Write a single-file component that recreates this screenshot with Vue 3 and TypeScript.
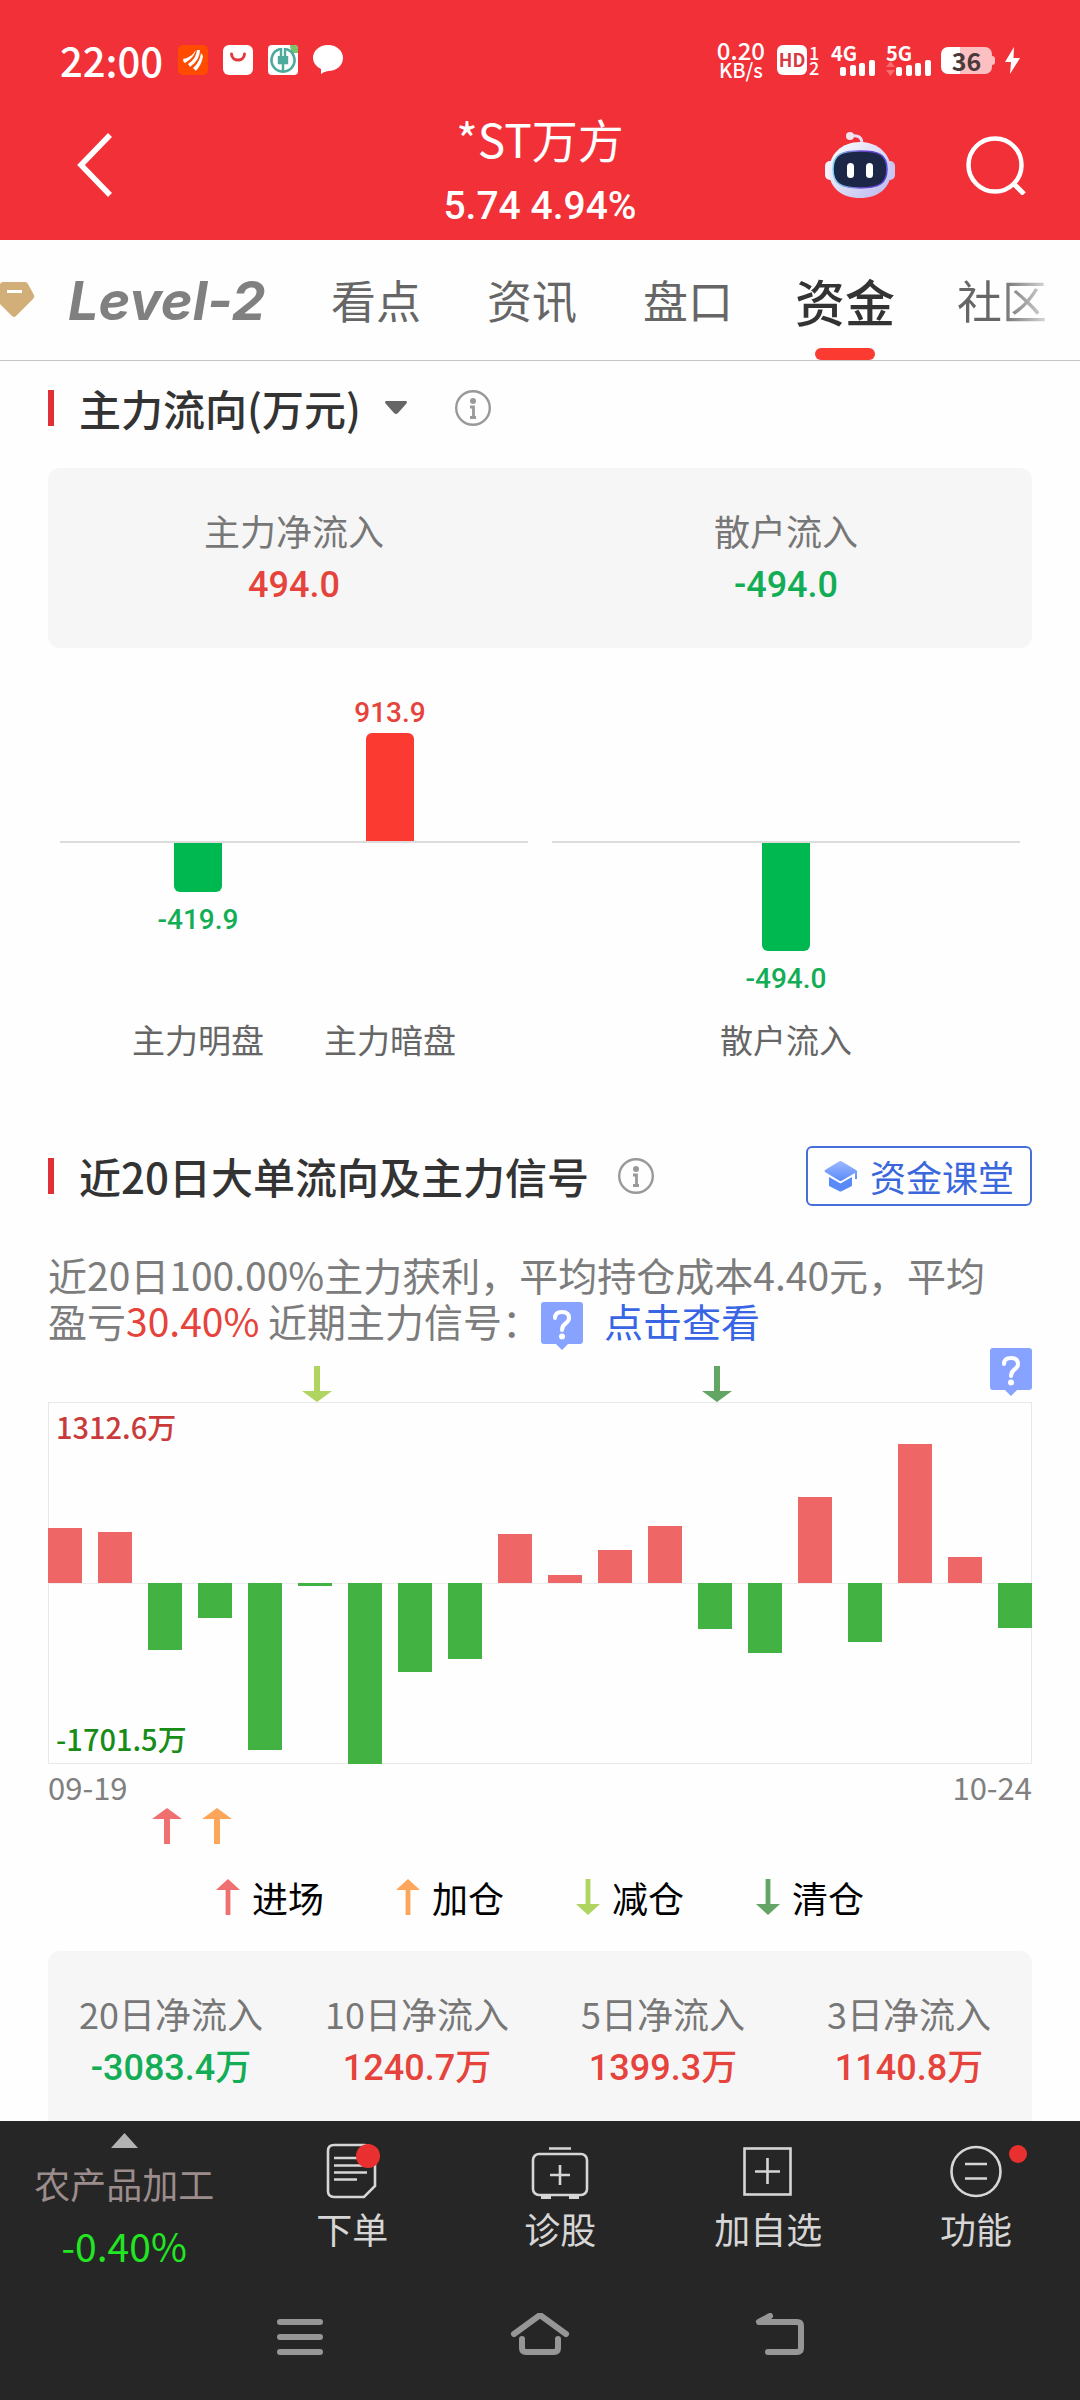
<script setup lang="ts">
interface FlowBar {
  name: string
  value: number
  height: number
}

interface Signal {
  id: string
  label: string
  color: string
  up: boolean
}

const tabs = ['看点', '资讯', '盘口', '资金', '社区']
const activeTab = '资金'

const summary = [
  { label: '主力净流入', value: 494.0 },
  { label: '散户流入', value: -494.0 },
]

const flowGroups: FlowBar[][] = [
  [
    { name: '主力明盘', value: -419.9, height: 49 },
    { name: '主力暗盘', value: 913.9, height: 108 },
  ],
  [{ name: '散户流入', value: -494.0, height: 108 }],
]

const maxFlow = 1701.5
const dailyFlow = [
  517, 484, -630, -322, -1566, -28, -1701.5, -837, -714, 461,
  75, 314, 536, -432, -656, 808, -555, 1312.6, 250, -420,
]

const signals: Signal[] = [
  { id: 'enter', label: '进场', color: '#f07070', up: true },
  { id: 'add', label: '加仓', color: '#fca65c', up: true },
  { id: 'reduce', label: '减仓', color: '#afd45f', up: false },
  { id: 'clear', label: '清仓', color: '#62a565', up: false },
]

const sellMarks: Record<number, Signal> = { 5: signals[2], 13: signals[3] }
const buyMarks: Record<number, Signal> = { 2: signals[0], 3: signals[1] }

const periods = [
  { label: '20日净流入', value: -3083.4 },
  { label: '10日净流入', value: 1240.7 },
  { label: '5日净流入', value: 1399.3 },
  { label: '3日净流入', value: 1140.8 },
]

const downPath = 'M12 0H18V25H30L15 36L0 25H12Z'
const upPath = 'M12 36H18V11H30L15 0L0 11H12Z'

const trend = (value: number) => (value < 0 ? 'down' : 'up')

const barStyle = (value: number) => {
  const size = (Math.abs(value) / maxFlow) * 50
  return value < 0
    ? { height: `${size}%`, marginTop: '181px' }
    : { height: `${size}%`, marginBottom: '181px' }
}
</script>

<template>
  <div class="page">
    <header class="top">
      <div class="status">
        <div class="status-left">
          <span class="clock">22:00</span>
          <svg width="30" height="30" viewBox="0 0 30 30">
            <rect width="30" height="30" rx="5" fill="#ff4a00" />
            <path d="M5 14Q13 13 18 5Q16 13 7 18Q5 17 5 14ZM10 19Q18 14 19 5L22 5Q22 15 12 22ZM15 23Q22 17 23 8L25 11Q24 19 18 26Z" fill="#fff" />
          </svg>
          <svg width="30" height="30" viewBox="0 0 30 30">
            <rect width="30" height="30" rx="6" fill="#fff" />
            <path d="M8.500 9C9 17 21 17 21.500 9" fill="none" stroke="#e03a40" stroke-width="3" stroke-linecap="round" />
          </svg>
          <svg width="30" height="30" viewBox="0 0 30 30">
            <rect width="30" height="30" rx="4" fill="#fff" />
            <path d="M22 0H26Q30 0 30 4V8H25Q22 5 22 0Z" fill="#7ac26a" />
            <path d="M12 4A11.500 11.500 0 1 0 18 4" fill="none" stroke="#4dab9d" stroke-width="2.600" />
            <path d="M13 3V12M17 3V12M15 12V26M11 11V18H19V11" fill="none" stroke="#4dab9d" stroke-width="2.400" />
            <rect x="11" y="11" width="8" height="8" fill="#4dab9d" />
          </svg>
          <svg width="30" height="30" viewBox="0 0 30 30">
            <path d="M15 0C24 0 30 6 30 13S24 26 15 26Q10 27 8 29V24Q0 20 0 13C0 6 6 0 15 0Z" fill="#fff" />
          </svg>
        </div>
        <div class="status-right">
          <div class="speed"><span class="rate">0.20</span><span class="unit">KB/s</span></div>
          <div class="hd">
            <span class="hd-box">HD</span>
            <span class="hd-sims"><span>1</span><span>2</span></span>
          </div>
          <div class="signal">
            <span>4G</span>
            <svg width="45" height="16" viewBox="0 0 45 16" fill="#fff">
              <rect x="9" y="7" width="6" height="9" rx="2" /><rect x="19" y="5" width="6" height="11" rx="2" />
              <rect x="28" y="3" width="6" height="13" rx="2" /><rect x="38" y="0" width="6" height="16" rx="2" />
            </svg>
          </div>
          <div class="signal">
            <span>5G</span>
            <svg width="45" height="16" viewBox="0 0 45 16" fill="#fff">
              <path d="M0 7L4.500 1L9 7ZM0 10L4.500 16L9 10Z" fill="#fa6a6e" />
              <rect x="10" y="7" width="6" height="9" rx="2" /><rect x="20" y="5" width="6" height="11" rx="2" />
              <rect x="29" y="3" width="6" height="13" rx="2" /><rect x="39" y="0" width="6" height="16" rx="2" />
            </svg>
          </div>
          <div class="battery">36</div>
          <svg width="15" height="27" viewBox="0 0 15 27"><path d="M9 0L0 15H6L5 27L15 11H8.500Z" fill="#fff" /></svg>
        </div>
      </div>
      <div class="nav">
        <div class="nav-side">
          <button class="icon-btn" type="button" aria-label="返回">
            <svg width="36" height="66" viewBox="0 0 36 66"><path d="M34 3L5 33L34 63" fill="none" stroke="#fff" stroke-width="5.500" /></svg>
          </button>
        </div>
        <div class="nav-title">
          <h1>*ST万方</h1>
          <p class="num">5.74 4.94%</p>
        </div>
        <div class="nav-side right">
          <button class="icon-btn" type="button" aria-label="智能助手">
            <svg width="72" height="66" viewBox="0 0 72 66">
              <defs>
                <linearGradient id="shell" x1="0" y1="0" x2="1" y2="1">
                  <stop offset="0" stop-color="#ffffff" /><stop offset="1" stop-color="#b9b8ee" />
                </linearGradient>
                <linearGradient id="rim" x1="0" y1="0" x2="1" y2="0">
                  <stop offset="0" stop-color="#7fd4f2" /><stop offset="0.600" stop-color="#6a3fd0" /><stop offset="1" stop-color="#5a4be0" />
                </linearGradient>
              </defs>
              <path d="M27 4Q38 2 38 12" fill="none" stroke="#e6ddf5" stroke-width="3" />
              <circle cx="26" cy="4" r="4" fill="#f3e3f0" />
              <rect x="1" y="29" width="12" height="19" rx="5" fill="#f4f1fc" />
              <rect x="59" y="29" width="12" height="19" rx="5" fill="#c9c6f2" />
              <path d="M36 10C54 10 67 22 67 39C67 56 54 66 36 66S5 56 5 39C5 22 18 10 36 10Z" fill="url(#shell)" />
              <path d="M36 19C54 19 63 22 63 37C63 51 56 56 36 56S9 51 9 37C9 22 18 19 36 19Z" fill="#1c2747" stroke="url(#rim)" stroke-width="1.500" />
              <rect x="23" y="31" width="7" height="15" rx="3.500" fill="#fff" />
              <rect x="42" y="31" width="7" height="15" rx="3.500" fill="#fff" />
            </svg>
          </button>
          <button class="icon-btn" type="button" aria-label="搜索">
            <svg width="60" height="60" viewBox="0 0 60 60" fill="none" stroke="#fff">
              <circle cx="29" cy="30" r="26.500" stroke-width="4.500" /><path d="M48 49L58 59" stroke-width="5" />
            </svg>
          </button>
        </div>
      </div>
    </header>

    <nav class="tabs">
      <svg class="gem" width="36" height="42" viewBox="0 0 36 42">
        <path d="M0 5Q1 3 3 3H25Q27 3 28 5L34 16Q35 18 33 20L16 37Q14 39 12 37L0 25Z" fill="#d2ae78" />
        <rect x="7" y="11" width="15" height="3" fill="#fff" />
      </svg>
      <a class="level" href="#level2">Level-2</a>
      <a v-for="t in tabs" :key="t" class="tab" :class="{ active: t === activeTab, fading: t === '社区' }" :href="'#' + t">{{ t }}</a>
    </nav>

    <main class="content">
      <section>
        <div class="head">
          <h2><button class="picker" type="button">主力流向(万元)<svg width="22" height="14" viewBox="0 0 22 14"><path d="M1 0H21Q23 1 21 3L13 12Q11 14 9 12L1 3Q-1 1 1 0Z" fill="#666" /></svg></button></h2>
          <button class="info first" type="button" aria-label="说明">
            <svg width="36" height="36" viewBox="0 0 36 36">
              <circle cx="18" cy="18" r="16.800" fill="none" stroke="#999" stroke-width="2.400" />
              <circle cx="18" cy="11" r="3" fill="#999" /><path d="M15 17H18.500V27M15 27.500H21" fill="none" stroke="#999" stroke-width="2.800" />
            </svg>
          </button>
        </div>

        <dl class="card">
          <div v-for="s in summary" :key="s.label" class="stat">
            <dt>{{ s.label }}</dt>
            <dd class="num" :class="trend(s.value)">{{ s.value.toFixed(1) }}</dd>
          </div>
        </dl>

        <div class="flow">
          <div v-for="(group, g) in flowGroups" :key="g" class="flow-group">
            <div class="flow-row above">
              <div v-for="b in group" :key="b.name" class="flow-cell">
                <template v-if="b.value > 0">
                  <span class="num flow-value up">{{ b.value.toFixed(1) }}</span>
                  <i class="flow-bar pos" :style="{ height: b.height + 'px' }"></i>
                </template>
              </div>
            </div>
            <div class="flow-row below">
              <div v-for="b in group" :key="b.name" class="flow-cell">
                <template v-if="b.value < 0">
                  <i class="flow-bar neg" :style="{ height: b.height + 'px' }"></i>
                  <span class="num flow-value down">{{ b.value.toFixed(1) }}</span>
                </template>
              </div>
            </div>
            <div class="flow-row names">
              <div v-for="b in group" :key="b.name" class="flow-cell">{{ b.name }}</div>
            </div>
          </div>
        </div>
      </section>

      <section class="orders">
        <div class="head">
          <h2>近20日大单流向及主力信号</h2>
          <button class="info" type="button" aria-label="说明">
            <svg width="36" height="36" viewBox="0 0 36 36">
              <circle cx="18" cy="18" r="16.800" fill="none" stroke="#999" stroke-width="2.400" />
              <circle cx="18" cy="11" r="3" fill="#999" /><path d="M15 17H18.500V27M15 27.500H21" fill="none" stroke="#999" stroke-width="2.800" />
            </svg>
          </button>
          <button class="lesson" type="button">
            <svg width="34" height="32" viewBox="0 0 34 32">
              <defs>
                <linearGradient id="cap" x1="0" y1="0" x2="0" y2="1">
                  <stop offset="0" stop-color="#9db9ff" /><stop offset="1" stop-color="#5a8af8" />
                </linearGradient>
              </defs>
              <path d="M15 1.500Q16.500 0.500 18 1.500L32 10Q34 11 33 13V19H31V13L18 20.500Q16.500 21.500 15 20.500L1 12Q0 11 1 10Z" fill="url(#cap)" />
              <path d="M5 17L16.500 23.500L28 17V25Q28 26 27 26.500L18 31Q16.500 32 15 31L6 26.500Q5 26 5 25Z" fill="#5a8af8" />
            </svg>
            资金课堂
          </button>
        </div>

        <p class="desc">
          近20日100.00%主力获利，平均持仓成本4.40元，平均盈亏<em>30.40%</em> 近期主力信号：<svg class="help" width="42" height="48" viewBox="0 0 42 48">
            <path d="M3 0H39Q42 0 42 3V39Q42 42 39 42H27L21 48L15 42H3Q0 42 0 39V3Q0 0 3 0Z" fill="#87a2ff" />
            <path d="M14 16Q14 10 21 10Q28 10 28 16Q28 19 24.500 21.500Q21 24 21 28" fill="none" stroke="#fff" stroke-width="4" stroke-linecap="round" /><circle cx="21" cy="34.500" r="3" fill="#fff" />
          </svg><a href="#signal">点击查看</a>
        </p>

        <div class="marks sell">
          <span v-for="(v, i) in dailyFlow" :key="i" class="mark">
            <svg v-if="sellMarks[i]" width="30" height="36" viewBox="0 0 30 36"><path :d="downPath" :fill="sellMarks[i].color" /></svg>
          </span>
          <button class="tip" type="button" aria-label="帮助">
            <svg width="42" height="48" viewBox="0 0 42 48">
              <path d="M3 0H39Q42 0 42 3V39Q42 42 39 42H27L21 48L15 42H3Q0 42 0 39V3Q0 0 3 0Z" fill="#87a2ff" />
              <path d="M14 16Q14 10 21 10Q28 10 28 16Q28 19 24.500 21.500Q21 24 21 28" fill="none" stroke="#fff" stroke-width="4" stroke-linecap="round" /><circle cx="21" cy="34.500" r="3" fill="#fff" />
            </svg>
          </button>
        </div>
        <div class="chart">
          <i v-for="(v, i) in dailyFlow" :key="i" class="bar" :class="v < 0 ? 'neg' : 'pos'" :style="barStyle(v)"></i>
          <span class="limit high">1312.6万</span>
          <span class="limit low">-1701.5万</span>
        </div>
        <div class="dates"><span>09-19</span><span>10-24</span></div>
        <div class="marks">
          <span v-for="(v, i) in dailyFlow" :key="i" class="mark">
            <svg v-if="buyMarks[i]" width="30" height="36" viewBox="0 0 30 36"><path :d="upPath" :fill="buyMarks[i].color" /></svg>
          </span>
        </div>
        <ul class="legend">
          <li v-for="s in signals" :key="s.id">
            <svg width="24" height="36" viewBox="0 0 30 36" preserveAspectRatio="none"><path :d="s.up ? upPath : downPath" :fill="s.color" /></svg>
            {{ s.label }}
          </li>
        </ul>
      </section>

      <dl class="card periods">
        <div v-for="p in periods" :key="p.label" class="stat">
          <dt>{{ p.label }}</dt>
          <dd class="num" :class="trend(p.value)">{{ p.value.toFixed(1) }}万</dd>
        </div>
      </dl>
    </main>

    <footer class="bottom">
      <div class="tools">
        <a class="industry" href="#industry">
          <svg width="27" height="15" viewBox="0 0 27 15"><path d="M13.500 0L27 15H0Z" fill="#b3b3b3" /></svg>
          <span class="industry-name">农产品加工</span>
          <span class="industry-rate">-0.40%</span>
        </a>
        <button class="tool" type="button">
          <svg width="60" height="60" viewBox="0 0 60 60" fill="none" stroke="#d6d6d6" stroke-width="2.600">
            <path d="M12 4H42Q53 4 53 15V45L42 56H12Q6 56 6 50V10Q6 4 12 4Z" />
            <path d="M12 17H40M12 24.500H44M12 31.500H45M12 38.500H35" />
            <circle cx="46" cy="15" r="12" fill="#e93030" stroke="none" />
          </svg>
          下单
        </button>
        <button class="tool" type="button">
          <svg width="60" height="60" viewBox="0 0 60 60" fill="none" stroke="#d6d6d6" stroke-width="2.600">
            <rect x="3" y="13" width="54" height="41" rx="6" /><path d="M19 7.500H41M30 24V44M20 34H40" /><path d="M11 56.500H21M39 56.500H49" stroke-width="3" />
          </svg>
          诊股
        </button>
        <button class="tool" type="button">
          <svg width="60" height="60" viewBox="0 0 60 60" fill="none" stroke="#d6d6d6" stroke-width="2.600">
            <rect x="6.500" y="7.500" width="46" height="46" /><path d="M29.500 17V43M17 30.500H42" />
          </svg>
          加自选
        </button>
        <button class="tool badge" type="button">
          <svg width="60" height="60" viewBox="0 0 60 60" fill="none" stroke="#d6d6d6" stroke-width="2.600">
            <circle cx="30" cy="30.500" r="24.500" /><path d="M19 23H41M19 37.500H41" />
          </svg>
          功能
        </button>
      </div>
      <div class="system">
        <button class="icon-btn" type="button" aria-label="最近任务">
          <svg width="60" height="48" viewBox="0 0 60 48" fill="none" stroke="#969696" stroke-width="6" stroke-linecap="round"><path d="M10 9H50M10 24H50M10 39H50" /></svg>
        </button>
        <button class="icon-btn" type="button" aria-label="主页">
          <svg width="60" height="48" viewBox="0 0 60 48" fill="none" stroke="#969696" stroke-width="6" stroke-linecap="round" stroke-linejoin="round">
            <path d="M4 21L30 2L56 21M12 26V35Q12 39 16 39H44Q48 39 48 35V26" />
          </svg>
        </button>
        <button class="icon-btn" type="button" aria-label="后退">
          <svg width="60" height="48" viewBox="0 0 60 48" fill="none" stroke="#969696" stroke-width="6" stroke-linecap="round" stroke-linejoin="round">
            <path d="M20 3L9 9H47Q51 9 51 13V35Q51 39 47 39H18" />
          </svg>
        </button>
      </div>
    </footer>
  </div>
</template>

<style>
body {
  margin: 0;
  background: #fff;
}
</style>

<style scoped>
.page {
  display: flex;
  flex-direction: column;
  min-height: 100vh;
  overflow-x: hidden;
  background: #fefefe;
  color: #333;
  font-family: "Noto Sans CJK SC", sans-serif;
}
h1, h2, p, dl, dd, ul {
  margin: 0;
  padding: 0;
  font-weight: 400;
}
button {
  margin: 0;
  padding: 0;
  border: 0;
  background: none;
  color: inherit;
  font: inherit;
}
a {
  color: inherit;
  text-decoration: none;
}
svg {
  display: block;
  flex: none;
}
.num {
  font-family: Roboto, "Noto Sans CJK SC", sans-serif;
  font-weight: 500;
}
.up { color: #e5433b; }
.down { color: #12ad54; }

.top {
  background: #f13038;
  color: #fff;
}
.status {
  display: flex;
  justify-content: space-between;
  align-items: center;
  height: 96px;
  padding: 12px 60px 0;
}
.status-left, .status-right {
  display: flex;
  align-items: center;
}
.status-left { gap: 15px; }
.status-right { gap: 10px; }
.clock {
  font-size: 40px;
  line-height: 48px;
  font-weight: 500;
}
.speed {
  display: flex;
  flex-direction: column;
  align-items: center;
  margin-right: 2px;
  font-weight: 500;
  line-height: 20px;
}
.rate { font-size: 24px; }
.unit { font-size: 20px; }
.hd {
  display: flex;
  gap: 2px;
}
.hd-box {
  width: 30px;
  height: 30px;
  border-radius: 6px;
  background: #fff;
  color: #d63a42;
  font-size: 18px;
  line-height: 29px;
  font-weight: 700;
  text-align: center;
}
.hd-sims {
  display: flex;
  flex-direction: column;
  width: 12px;
  font-size: 18px;
  line-height: 15px;
  font-weight: 500;
}
.signal {
  display: flex;
  flex-direction: column;
  font-size: 20px;
  line-height: 15px;
  font-weight: 700;
}
.battery {
  position: relative;
  width: 51px;
  height: 27px;
  margin-right: 3px;
  border-radius: 7px;
  background: linear-gradient(90deg, #fff 37%, #fcc0c3 37%);
  color: #4a3a3c;
  font-size: 25px;
  line-height: 27px;
  font-weight: 700;
  text-align: center;
}
.battery::after {
  content: "";
  position: absolute;
  top: 9px;
  right: -3px;
  width: 3px;
  height: 9px;
  border-radius: 0 3px 3px 0;
  background: #fcc0c3;
}
.nav {
  display: grid;
  grid-template-columns: 1fr auto 1fr;
  height: 132px;
}
.nav-side {
  display: flex;
  align-items: center;
  height: 114px;
  padding-left: 76px;
}
.nav-side.right {
  justify-content: flex-end;
  gap: 70px;
  padding: 0 54px 0 0;
}
.nav-title { text-align: center; }
.nav-title h1 {
  font-size: 46px;
  line-height: 60px;
}
.nav-title p {
  font-size: 39px;
  line-height: 76px;
}

.tabs {
  display: flex;
  align-items: center;
  height: 120px;
  overflow: hidden;
  border-bottom: 1px solid #c4c4c4;
  color: #666;
  white-space: nowrap;
}
.level {
  width: 237px;
  padding-left: 32px;
  color: #808080;
  font-family: Inter, sans-serif;
  font-size: 54px;
  font-weight: 700;
  font-style: italic;
}
.tab {
  position: relative;
  padding: 0 33px;
  font-size: 45px;
  line-height: 120px;
}
.tab.active {
  padding: 0 29px;
  color: #333;
  font-size: 50px;
  font-weight: 500;
}
.tab.active::after {
  content: "";
  position: absolute;
  bottom: 0;
  left: 50%;
  width: 60px;
  height: 12px;
  margin-left: -30px;
  border-radius: 6px;
  background: #fb3a32;
}
.tab.fading {
  background: linear-gradient(90deg, #666 48%, #ddd 80%);
  background-clip: text;
  color: transparent;
}

.content {
  display: flex;
  flex: 1;
  flex-direction: column;
  padding: 17px 48px 0;
}
.head {
  display: flex;
  align-items: center;
  height: 60px;
}
.head::before {
  content: "";
  width: 6px;
  height: 36px;
  margin-right: 25px;
  background: #e03035;
}
.head h2 {
  font-size: 42px;
  font-weight: 500;
  line-height: 60px;
}
.picker {
  display: flex;
  align-items: center;
  gap: 24px;
}
.info { margin-left: 29px; }
.info.first { margin-left: 48px; }
.card {
  display: flex;
  margin-top: 30px;
  padding: 36px 0 34px;
  border-radius: 12px;
  background: #f6f6f6;
  text-align: center;
}
.stat { flex: 1; }
.stat dt {
  color: #777;
  font-size: 36px;
  line-height: 52px;
}
.stat dd {
  font-size: 36px;
  line-height: 58px;
}

.flow {
  display: flex;
  gap: 24px;
  padding: 0 12px;
}
.flow-group { flex: 1; }
.flow-row {
  display: flex;
  justify-content: center;
}
.flow-cell {
  display: flex;
  flex-direction: column;
  align-items: center;
  width: 192px;
}
.above {
  height: 193px;
  border-bottom: 2px solid #dcdcdc;
}
.above .flow-cell { justify-content: flex-end; }
.below { height: 170px; }
.names {
  color: #666;
  font-size: 33px;
  line-height: 52px;
}
.flow-bar { width: 48px; }
.flow-bar.pos {
  border-radius: 6px 6px 0 0;
  background: #fb3b31;
}
.flow-bar.neg {
  border-radius: 0 0 6px 6px;
  background: #00b850;
}
.flow-value {
  font-size: 28px;
  line-height: 40px;
}
.flow-value.down { margin-top: 8px; }

.orders { margin-top: 81px; }
.lesson {
  display: flex;
  align-items: center;
  gap: 12px;
  box-sizing: border-box;
  height: 60px;
  margin-left: auto;
  padding: 0 16px;
  border: 2px solid #4670d6;
  border-radius: 6px;
  color: #3a67dc;
  font-size: 36px;
}
.desc {
  margin-top: 45px;
  padding-right: 36px;
  color: #7c7c7c;
  font-size: 39px;
  line-height: 46px;
}
.desc em {
  color: #e5433b;
  font-style: normal;
}
.desc a {
  color: #3765e4;
}
.help {
  display: inline-block;
  margin: -6px 21px -6px 0;
  vertical-align: middle;
}
.marks {
  position: relative;
  display: flex;
  justify-content: space-between;
  align-items: flex-end;
  height: 36px;
}
.marks.sell { height: 58px; }
.mark {
  display: flex;
  justify-content: center;
  box-sizing: border-box;
  width: 34px;
  padding-left: 4px;
}
.tip {
  position: absolute;
  top: 4px;
  right: 0;
}
.chart {
  position: relative;
  display: flex;
  justify-content: space-between;
  align-items: flex-start;
  height: 362px;
  background: linear-gradient(#eee, #eee) 0 50% / 100% 1px no-repeat;
  box-shadow: inset 0 0 0 1px #e8e8e8;
}
.bar { width: 34px; }
.bar.pos {
  align-self: flex-end;
  background: #ef6667;
}
.bar.neg { background: #42b342; }
.limit {
  position: absolute;
  left: 8px;
  font-size: 29px;
  font-weight: 500;
  line-height: 36px;
}
.high {
  top: 6px;
  color: #c93b3b;
}
.low {
  bottom: 8px;
  color: #178c17;
}
.dates {
  display: flex;
  justify-content: space-between;
  padding: 6px 0 4px;
  color: #808080;
  font-size: 31px;
  line-height: 34px;
}
.legend {
  display: flex;
  justify-content: center;
  gap: 72px;
  margin-top: 26px;
  color: #000;
  font-size: 36px;
  line-height: 54px;
  list-style: none;
}
.legend li {
  display: flex;
  align-items: center;
  gap: 12px;
}
.periods {
  flex: 1;
  margin-top: 27px;
  padding-bottom: 18px;
  border-radius: 12px 12px 0 0;
}

.bottom {
  background: #262626;
  color: #d6d6d6;
}
.tools {
  display: flex;
  height: 152px;
}
.industry {
  display: flex;
  flex-direction: column;
  align-items: center;
  gap: 8px;
  box-sizing: border-box;
  width: 23%;
  padding-top: 12px;
  line-height: 54px;
}
.industry-name {
  color: #9c8c8c;
  font-size: 36px;
}
.industry-rate {
  color: #22e622;
  font-size: 39px;
}
.tool {
  position: relative;
  display: flex;
  flex: 1;
  flex-direction: column;
  align-items: center;
  padding-top: 20px;
  font-size: 36px;
  line-height: 54px;
}
.badge::after {
  content: "";
  position: absolute;
  top: 24px;
  left: 50%;
  width: 18px;
  height: 18px;
  margin-left: 33px;
  border-radius: 50%;
  background: #e93030;
}
.system {
  display: flex;
  justify-content: center;
  align-items: center;
  gap: 180px;
  height: 127px;
}
</style>
